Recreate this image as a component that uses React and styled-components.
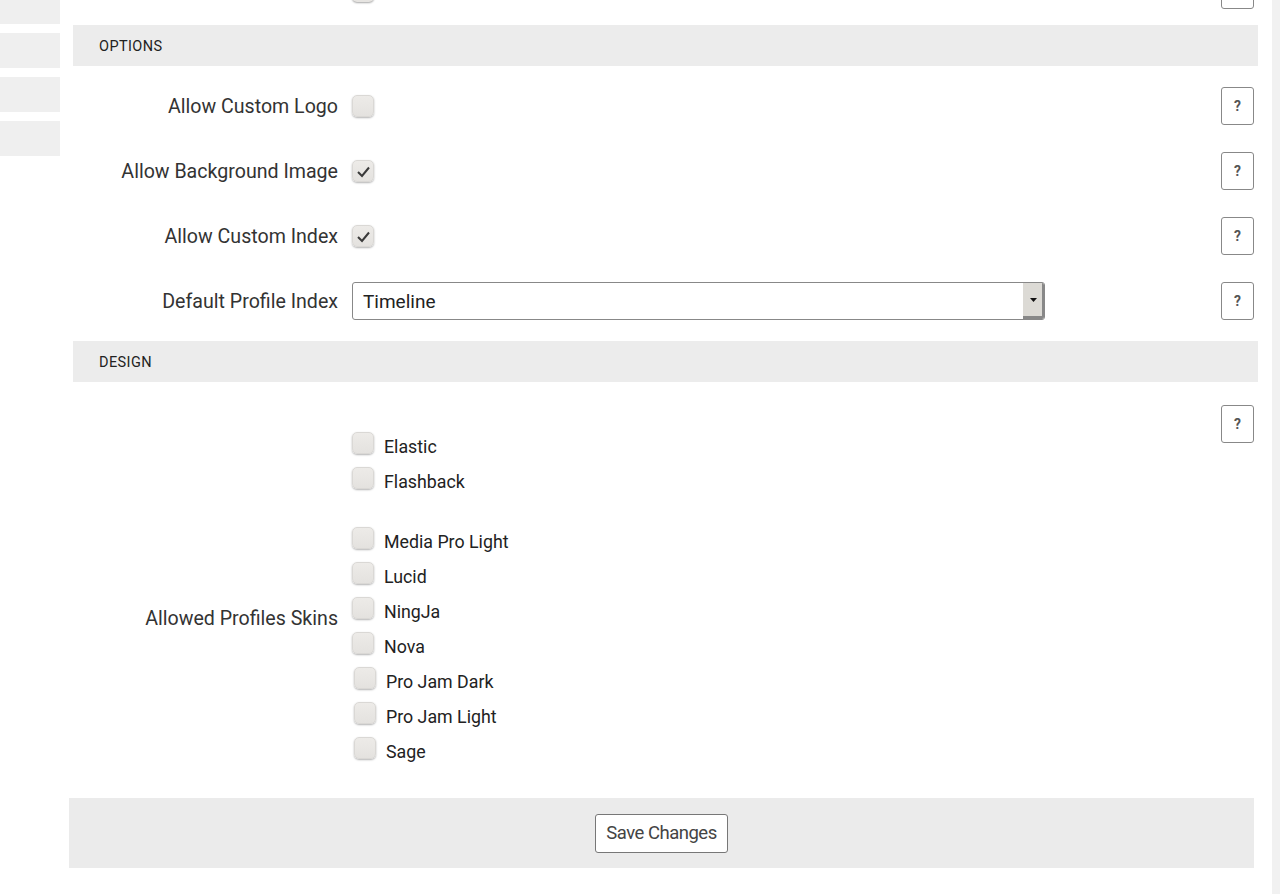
import React from 'react'
import styled, { createGlobalStyle } from 'styled-components'

const GlobalStyle = createGlobalStyle`
  html, body {
    margin: 0;
    padding: 0;
    background: #fff;
    font-family: Roboto, "Liberation Sans", sans-serif;
    color: #333;
  }
`

const skinGroups = [
  ['Elastic', 'Flashback'],
  ['Media Pro Light', 'Lucid', 'NingJa', 'Nova', 'Pro Jam Dark', 'Pro Jam Light', 'Sage'],
]

const options = [
  { label: 'Allow Custom Logo', checked: false },
  { label: 'Allow Background Image', checked: true },
  { label: 'Allow Custom Index', checked: true },
]

function Checkbox({ checked }) {
  return (
    <Box>
      {checked && (
        <svg width="15" height="13" viewBox="0 0 15 13">
          <path d="M2 7 L6 11 L13 2.5" fill="none" stroke="#3a3a3a" strokeWidth="2" />
        </svg>
      )}
    </Box>
  )
}

function Help() {
  return <HelpButton>?</HelpButton>
}

export default function App() {
  return (
    <>
      <GlobalStyle />
      <Page>
        <Sidebar>
          <SideItem />
          <SideItem />
          <SideItem />
          <SideItem />
        </Sidebar>

        <Main>
          <TailRow>
            <Label />
            <TailBox />
            <Spacer />
            <TailHelp />
          </TailRow>

          <SectionHeader>Options</SectionHeader>
          <SectionBody>
            {options.map((o) => (
              <Row key={o.label}>
                <Label>{o.label}</Label>
                <Checkbox checked={o.checked} />
                <Spacer />
                <Help />
              </Row>
            ))}
            <Row>
              <Label>Default Profile Index</Label>
              <Select>
                <SelectText>Timeline</SelectText>
                <Arrow>
                  <svg width="7" height="4" viewBox="0 0 7 4">
                    <path d="M0 0 H7 L3.5 4 Z" fill="#111" />
                  </svg>
                </Arrow>
              </Select>
              <Spacer />
              <Help />
            </Row>
          </SectionBody>

          <SectionHeader>Design</SectionHeader>
          <DesignRow>
            <SkinLabel>Allowed Profiles Skins</SkinLabel>
            <SkinList>
              {skinGroups.map((group, gi) => (
                <SkinGroup key={gi}>
                  {group.map((s) => (
                    <SkinItem key={s} shifted={s.startsWith('Pro Jam') || s === 'Sage'}>
                      <Checkbox />
                      <SkinName>{s}</SkinName>
                    </SkinItem>
                  ))}
                </SkinGroup>
              ))}
            </SkinList>
            <Spacer />
            <Help />
          </DesignRow>

          <Footer>
            <SaveButton>Save Changes</SaveButton>
          </Footer>
        </Main>

        <Scrollbar />
      </Page>
    </>
  )
}

const Page = styled.div`
  display: flex;
  width: 1280px;
  height: 894px;
  overflow: hidden;
`

const Sidebar = styled.div`
  width: 60px;
  flex-shrink: 0;
  display: flex;
  flex-direction: column;
  gap: 9px;
  margin-top: -11px;
`

const SideItem = styled.div`
  height: 35px;
  background: #efefef;
`

const Main = styled.div`
  flex: 1;
  padding: 0 14px 0 13px;
  display: flex;
  flex-direction: column;
`

const Scrollbar = styled.div`
  width: 8px;
  flex-shrink: 0;
  background: #f1f1f1;
`

const TailRow = styled.div`
  height: 25px;
  display: flex;
  align-items: flex-start;
  padding-right: 4px;
  overflow: hidden;
`

const TailBox = styled.div`
  width: 22px;
  height: 22px;
  margin-top: -20px;
  border-radius: 5px;
  background: #e6e4e1;
  box-shadow: 0 1px 2px rgba(0, 0, 0, 0.35);
`

const TailHelp = styled.div`
  width: 31px;
  height: 36px;
  margin-top: -29px;
  border: 1px solid #888;
  border-radius: 3px;
`

const SectionHeader = styled.div`
  height: 41px;
  box-sizing: border-box;
  padding: 2px 0 0 26px;
  display: flex;
  align-items: center;
  background: #ececec;
  font-size: 14.5px;
  letter-spacing: 0.4px;
  text-transform: uppercase;
  color: #222;
`

const SectionBody = styled.div`
  padding: 7px 4px 8px 0;
`

const Row = styled.div`
  height: 65px;
  display: flex;
  align-items: center;
  padding-top: 1px;
  box-sizing: border-box;
`

const Label = styled.div`
  width: 279px;
  padding-right: 14px;
  box-sizing: border-box;
  flex-shrink: 0;
  text-align: right;
  font-size: 19.6px;
  color: #333;
`

const Spacer = styled.div`
  flex: 1;
`

const Box = styled.div`
  width: 22px;
  height: 22px;
  flex-shrink: 0;
  box-sizing: border-box;
  border-radius: 5px;
  background: linear-gradient(#edebe8, #e4e2df);
  border: 1px solid #dad8d5;
  box-shadow: 0 1px 2px rgba(0, 0, 0, 0.3);
  display: flex;
  align-items: center;
  justify-content: center;
`

const HelpButton = styled.div`
  width: 33px;
  height: 38px;
  box-sizing: border-box;
  border: 1px solid #888;
  border-radius: 3px;
  display: flex;
  align-items: center;
  justify-content: center;
  font-size: 14px;
  font-weight: bold;
  color: #555;
  background: #fff;
`

const Select = styled.div`
  width: 693px;
  height: 38px;
  box-sizing: border-box;
  border: 1px solid #888;
  border-radius: 3px;
  display: flex;
  align-items: stretch;
  overflow: hidden;
`

const SelectText = styled.div`
  flex: 1;
  display: flex;
  align-items: center;
  padding-left: 10px;
  font-size: 19px;
  color: #222;
`

const Arrow = styled.div`
  width: 21px;
  background: #dcdad5;
  display: flex;
  align-items: center;
  justify-content: center;
  box-shadow: inset -2px -3px 0 #888;
  padding-bottom: 2px;
`

const DesignRow = styled.div`
  display: flex;
  align-items: flex-start;
  padding: 23px 4px 29px 0;
`

const SkinLabel = styled(Label)`
  margin-top: 202px;
`

const SkinList = styled.div`
  margin-top: 24px;
  display: flex;
  flex-direction: column;
  gap: 25px;
`

const SkinGroup = styled.div`
  display: flex;
  flex-direction: column;
`

const SkinItem = styled.div`
  height: 35px;
  display: flex;
  align-items: center;
  gap: 10px;
  padding-left: ${(p) => (p.shifted ? '2px' : '0')};

  & > div:first-child {
    margin-top: -8px;
  }
`

const SkinName = styled.div`
  font-size: 17.8px;
  color: #222;
`

const Footer = styled.div`
  height: 70px;
  margin: 0 0 0 -4px;
  width: 1185px;
  background: #ebebeb;
  display: flex;
  align-items: center;
  justify-content: center;
`

const SaveButton = styled.div`
  height: 39px;
  box-sizing: border-box;
  padding: 0 10px;
  border: 1px solid #777;
  border-radius: 3px;
  background: #fff;
  display: flex;
  align-items: center;
  font-size: 18.5px;
  color: #444;
  letter-spacing: -0.5px;
`
